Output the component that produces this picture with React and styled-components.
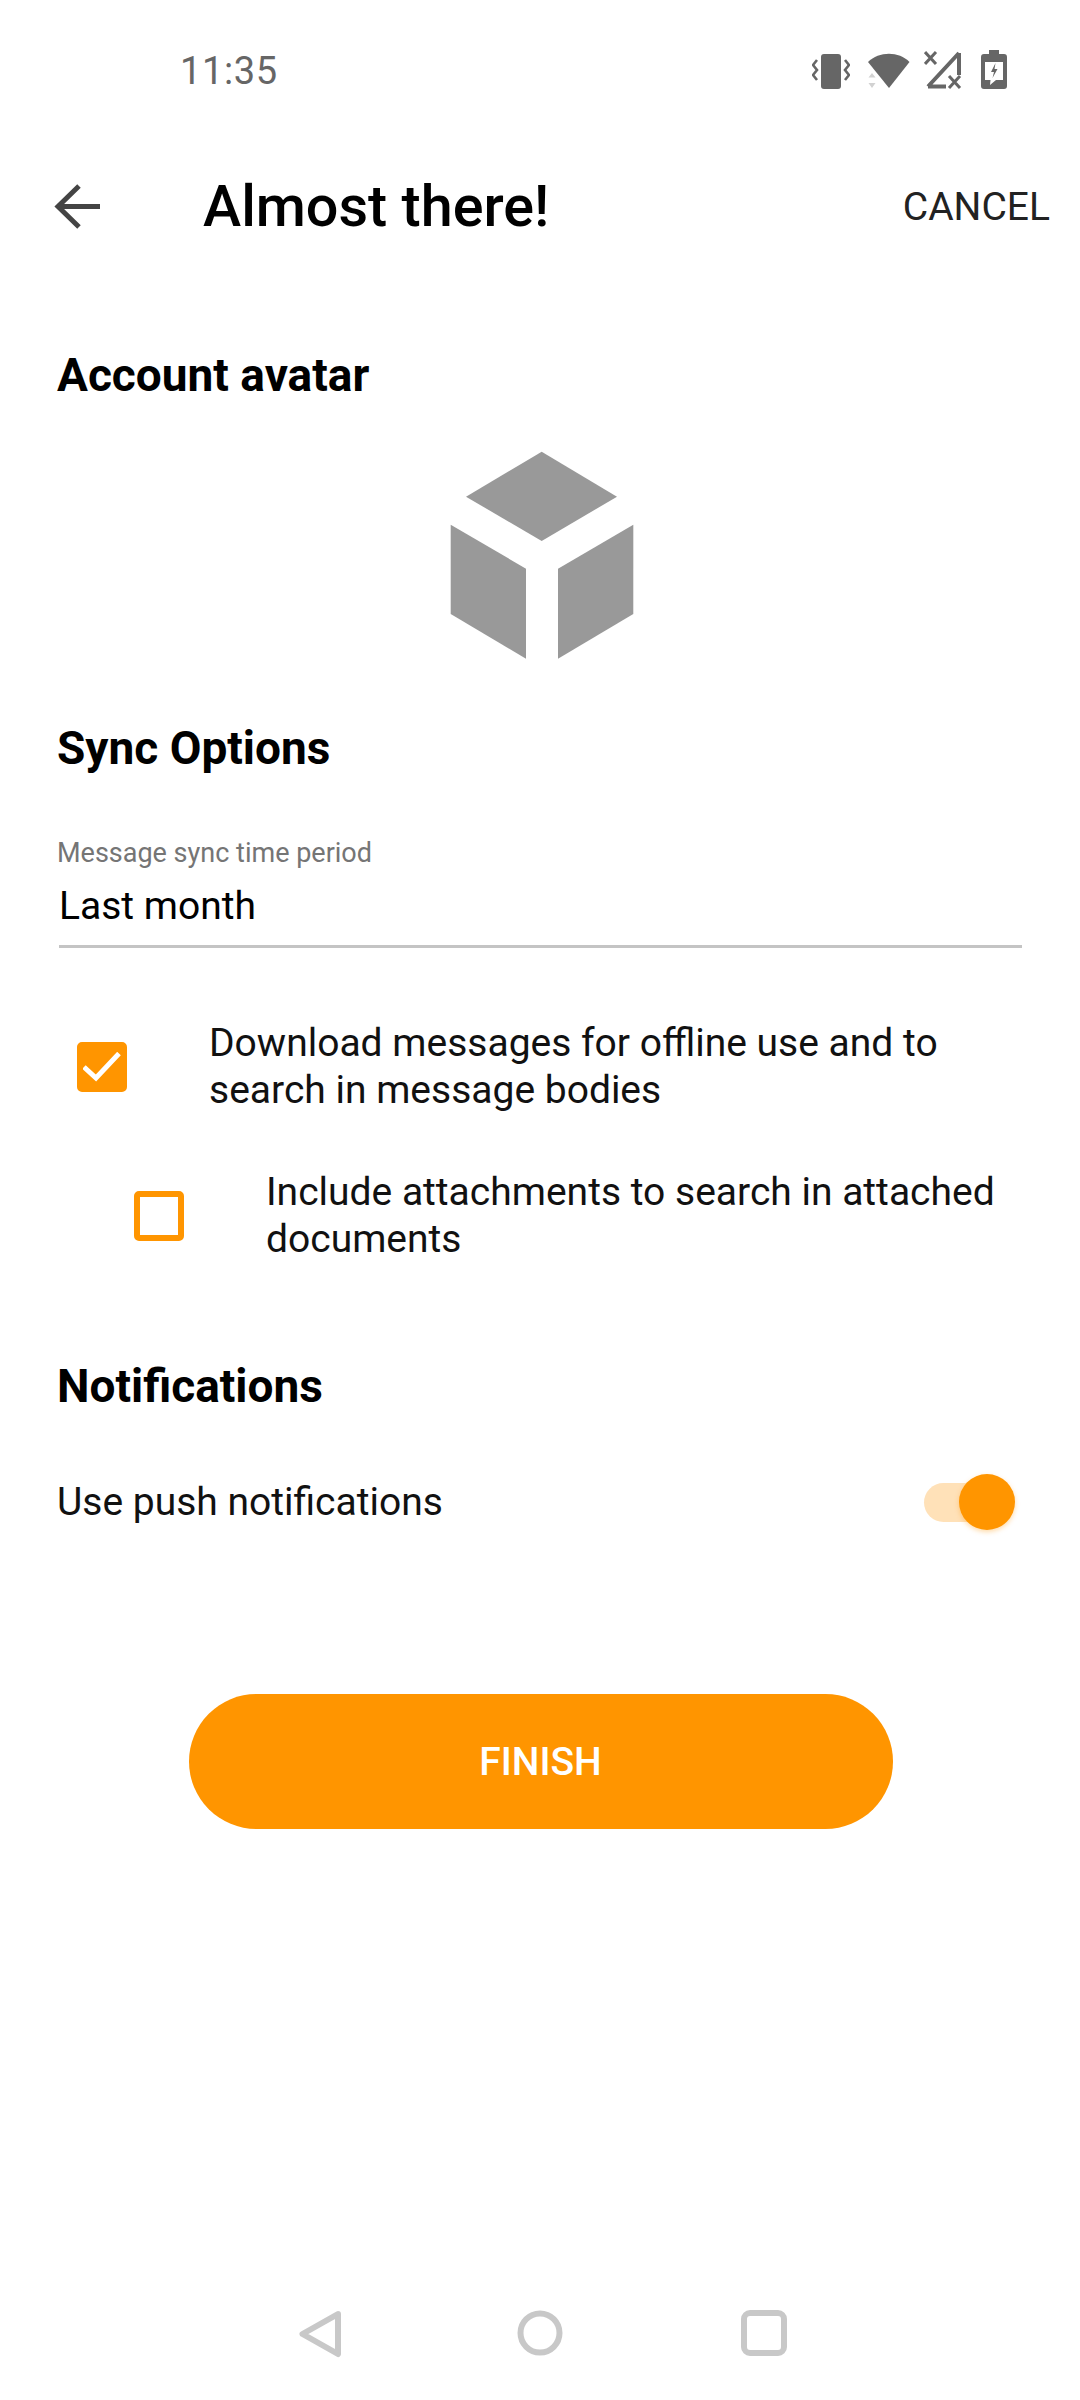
import styled, { createGlobalStyle } from "styled-components";

const GlobalStyle = createGlobalStyle`
  html, body {
    margin: 0;
    padding: 0;
    background: #fff;
    font-family: Roboto, "Liberation Sans", sans-serif;
  }
`;

const Page = styled.div`
  width: 1080px;
  height: 2400px;
  display: flex;
  flex-direction: column;
  background: #fff;
  color: #000;
  overflow: hidden;
`;

const StatusBar = styled.div`
  height: 140px;
  display: flex;
  justify-content: space-between;
  box-sizing: border-box;
  padding: 50px 73px 0 180px;
`;

const Clock = styled.div`
  font-size: 38px;
  line-height: 42px;
  letter-spacing: 0.6px;
  color: #666;
`;

const StatusIcons = styled.div`
  display: flex;
  align-items: flex-start;
  height: 40px;
  svg { display: block; }
`;

const Toolbar = styled.div`
  height: 134px;
  display: flex;
  align-items: center;
  padding-right: 30px;
`;

const BackButton = styled.div`
  width: 203px;
  padding-left: 54px;
  box-sizing: border-box;
  display: flex;
  svg { display: block; }
`;

const Title = styled.div`
  flex: 1;
  font-size: 57.500px;
  font-weight: 500;
  line-height: 66px;
`;

const Cancel = styled.div`
  font-size: 39px;
  font-weight: 400;
  color: #222;
`;

const Content = styled.div`
  display: flex;
  flex-direction: column;
  padding: 0 57px;
`;

const SectionTitle = styled.div`
  font-size: 46px;
  font-weight: 700;
  line-height: 52px;
  margin-top: ${(p) => p.$top}px;
`;

const AvatarRow = styled.div`
  display: flex;
  justify-content: center;
  margin: 50px 0 0 4px;
  svg { display: block; }
`;

const Field = styled.div`
  margin: 63px 0 0 2px;
  width: 963px;
  border-bottom: 3px solid #c4c4c4;
  padding-bottom: 16px;
`;

const FieldLabel = styled.div`
  font-size: 27px;
  line-height: 32px;
  color: #757575;
  margin-left: -2px;
`;

const FieldValue = styled.div`
  font-size: 39px;
  line-height: 46px;
  margin-top: 14px;
`;

const CheckRow = styled.div`
  display: flex;
  align-items: center;
  margin-top: ${(p) => p.$top}px;
  padding-left: ${(p) => p.$indent}px;
`;

const CheckBox = styled.div`
  width: 50px;
  height: 50px;
  flex: none;
  box-sizing: border-box;
  border-radius: 5px;
  border: 6px solid #ff9500;
  background: ${(p) => (p.$checked ? "#ff9500" : "#fff")};
  display: flex;
  align-items: center;
  justify-content: center;
  svg { display: block; }
`;

const CheckText = styled.div`
  margin-left: 82px;
  font-size: 39px;
  line-height: 47px;
  color: #111;
`;

const ToggleRow = styled.div`
  display: flex;
  align-items: center;
  justify-content: space-between;
  margin-top: 62px;
  padding-right: 8px;
`;

const ToggleLabel = styled.div`
  font-size: 39px;
  line-height: 46px;
  color: #111;
`;

const Toggle = styled.div`
  position: relative;
  width: 91px;
  height: 56px;
  display: flex;
  align-items: center;
`;

const ToggleTrack = styled.div`
  width: 72px;
  height: 39px;
  border-radius: 20px;
  background: #ffe1b8;
`;

const ToggleKnob = styled.div`
  position: absolute;
  right: 0;
  top: 0;
  width: 56px;
  height: 56px;
  border-radius: 50%;
  background: #ff9500;
  box-shadow: 0 2px 5px rgba(255, 149, 0, 0.35);
`;

const FinishButton = styled.div`
  align-self: center;
  width: 704px;
  height: 135px;
  margin: 164px 0 0 1px;
  border-radius: 68px;
  background: #ff9500;
  color: #fff;
  font-size: 39px;
  font-weight: 500;
  display: flex;
  align-items: center;
  justify-content: center;
`;

const NavBar = styled.div`
  margin-top: auto;
  height: 90px;
  display: flex;
  align-items: flex-start;
  padding-left: 299px;
  gap: 174px;
  svg { display: block; }
`;

const VibrateIcon = () => (
  <svg width="38" height="36" viewBox="0 0 38 36" style={{ marginTop: 4 }}>
    <rect x="9" y="0" width="20" height="35" rx="3" fill="#666" />
    <path d="M5 6 L1 11 L5 16 L1 21 L5 26" fill="none" stroke="#666" strokeWidth="2.6" />
    <path d="M33 6 L37 11 L33 16 L37 21 L33 26" fill="none" stroke="#666" strokeWidth="2.6" />
  </svg>
);

const WifiIcon = () => (
  <svg width="42" height="36" viewBox="0 0 42 36" style={{ marginLeft: 18, marginTop: 3 }}>
    <path d="M0 9 C11 -2 31 -2 41.500 9 L21 35 Z" fill="#666" />
    <path d="M4 20 L0.500 24.500 H7.500 Z M4 35 L0.500 30 H7.500 Z" fill="#d2d2d2" />
  </svg>
);

const SignalIcon = () => (
  <svg width="38" height="40" viewBox="0 0 38 40" style={{ marginLeft: 14 }}>
    <path d="M35 3 V25 M4 36.500 L35 3 M4 36.500 H22" fill="none" stroke="#666" strokeWidth="4" />
    <path d="M1 2 L12 14 M12 2 L1 14" stroke="#666" strokeWidth="3" />
    <path d="M25 26 L36 38 M36 26 L25 38" stroke="#666" strokeWidth="3" />
  </svg>
);

const BatteryIcon = () => (
  <svg width="26" height="40" viewBox="0 0 26 40" style={{ marginLeft: 19 }}>
    <path
      fillRule="evenodd"
      d="M8 0 H18 V4 H23 Q26 4 26 7 V36 Q26 39 23 39 H3 Q0 39 0 36 V7 Q0 4 3 4 H8 Z M4 12 V30 H9.500 L9 35 L15 30 H22 V12 Z"
      fill="#666"
    />
    <path d="M14.500 13 L10 22 H13 L11.500 28 L16.500 19 H13.500 Z" fill="#666" />
  </svg>
);

const BackIcon = () => (
  <svg width="46" height="46" viewBox="0 0 46 46">
    <path d="M46 22.500 H4 M25 2 L4 22.500 L25 43" fill="none" stroke="#444" strokeWidth="5" />
  </svg>
);

// polygon corners taken from the reference, origin at the left of the cube
const CubeIcon = () => (
  <svg width="184" height="208" viewBox="450 451 184 208">
    <polygon points="541.700,451.700 617,496.700 541.700,541 466,496.700" fill="#999" />
    <polygon points="450.700,524.700 526,568.700 526,658.700 450.700,614" fill="#999" />
    <polygon points="558,568.700 633.300,524.700 633.300,614 558,658.700" fill="#999" />
  </svg>
);

const CheckMark = () => (
  <svg width="38" height="30" viewBox="0 0 38 30">
    <path d="M1 15 L13 26 L36 1.500" fill="none" stroke="#fff" strokeWidth="5" />
  </svg>
);

const App = () => {
  return (
    <>
      <GlobalStyle />
      <Page>
        <StatusBar>
          <Clock>11:35</Clock>
          <StatusIcons>
            <VibrateIcon />
            <WifiIcon />
            <SignalIcon />
            <BatteryIcon />
          </StatusIcons>
        </StatusBar>

        <Toolbar>
          <BackButton>
            <BackIcon />
          </BackButton>
          <Title>Almost there!</Title>
          <Cancel>CANCEL</Cancel>
        </Toolbar>

        <Content>
          <SectionTitle $top={75}>Account avatar</SectionTitle>
          <AvatarRow>
            <CubeIcon />
          </AvatarRow>

          <SectionTitle $top={63}>Sync Options</SectionTitle>
          <Field>
            <FieldLabel>Message sync time period</FieldLabel>
            <FieldValue>Last month</FieldValue>
          </Field>

          <CheckRow $top={72} $indent={20}>
            <CheckBox $checked>
              <CheckMark />
            </CheckBox>
            <CheckText>
              Download messages for offline use and to
              <br />
              search in message bodies
            </CheckText>
          </CheckRow>
          <CheckRow $top={55} $indent={77}>
            <CheckBox />
            <CheckText>
              Include attachments to search in attached
              <br />
              documents
            </CheckText>
          </CheckRow>

          <SectionTitle $top={97}>Notifications</SectionTitle>
          <ToggleRow>
            <ToggleLabel>Use push notifications</ToggleLabel>
            <Toggle>
              <ToggleTrack />
              <ToggleKnob />
            </Toggle>
          </ToggleRow>

          <FinishButton>FINISH</FinishButton>
        </Content>

        <NavBar>
          <svg width="44" height="48" viewBox="0 0 44 48">
            <path
              d="M39 4 L3.500 24 L39 44 Z"
              fill="none"
              stroke="#c8c8c8"
              strokeWidth="6"
              strokeLinejoin="round"
            />
          </svg>
          <svg width="46" height="46" viewBox="0 0 46 46">
            <circle cx="23" cy="23" r="19.500" fill="none" stroke="#c8c8c8" strokeWidth="6" />
          </svg>
          <svg width="46" height="46" viewBox="0 0 46 46" style={{ marginLeft: 4 }}>
            <rect x="3" y="3" width="40" height="40" rx="6" fill="none" stroke="#c8c8c8" strokeWidth="6" />
          </svg>
        </NavBar>
      </Page>
    </>
  );
};

export default App;
